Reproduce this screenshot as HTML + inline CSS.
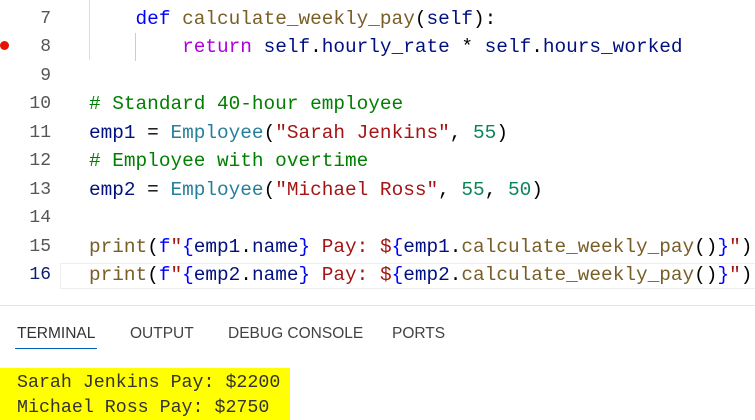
<!DOCTYPE html>
<html><head><style>
body{margin:0;width:755px;height:420px;background:#fff;overflow:hidden;position:relative;font-family:"Liberation Mono",monospace;}
.ln{position:absolute;left:0;width:51px;text-align:right;color:#555;font-size:18px;}
.cd{position:absolute;left:89px;font-size:19.4px;white-space:pre;color:#000;}
.k{color:#0000ff}.f{color:#795e26}.r{color:#af00db}.v{color:#001080}.s{color:#a31515}.n{color:#098658}.c{color:#008000}.t{color:#267f99}
.tab{position:absolute;top:325px;font-family:"Liberation Sans",sans-serif;font-size:15.5px;color:#424242;}
.out{position:absolute;left:17px;font-size:18.3px;color:#333;white-space:pre;}
</style></head><body>
<div style="position:absolute;left:89px;top:0;width:1px;height:60px;background:#ddd"></div>
<div style="position:absolute;left:135px;top:33px;width:1px;height:28px;background:#ccc"></div>
<div style="position:absolute;left:0;top:41px;width:9px;height:9px;border-radius:50%;background:#e51400"></div>
<div style="position:absolute;left:60px;top:263px;width:695px;height:26px;border:1px solid #eee;border-right:none;box-sizing:border-box"></div>
<div class="ln" style="top:9px">7</div><div class="cd" style="top:8px">    <span class="k">def</span> <span class="f">calculate_weekly_pay</span>(<span class="v">self</span>):</div>
<div class="ln" style="top:37px">8</div><div class="cd" style="top:36px">        <span class="r">return</span> <span class="v">self</span>.<span class="v">hourly_rate</span> * <span class="v">self</span>.<span class="v">hours_worked</span></div>
<div class="ln" style="top:66px">9</div>
<div class="ln" style="top:94px">10</div><div class="cd" style="top:93px"><span class="c"># Standard 40-hour employee</span></div>
<div class="ln" style="top:123px">11</div><div class="cd" style="top:122px"><span class="v">emp1</span> = <span class="t">Employee</span>(<span class="s">"Sarah Jenkins"</span>, <span class="n">55</span>)</div>
<div class="ln" style="top:151px">12</div><div class="cd" style="top:150px"><span class="c"># Employee with overtime</span></div>
<div class="ln" style="top:180px">13</div><div class="cd" style="top:179px"><span class="v">emp2</span> = <span class="t">Employee</span>(<span class="s">"Michael Ross"</span>, <span class="n">55</span>, <span class="n">50</span>)</div>
<div class="ln" style="top:208px">14</div>
<div class="ln" style="top:237px">15</div><div class="cd" style="top:236px"><span class="f">print</span>(<span class="k">f</span><span class="s">"</span><span class="k">{</span><span class="v">emp1</span>.<span class="v">name</span><span class="k">}</span><span class="s"> Pay: $</span><span class="k">{</span><span class="v">emp1</span>.<span class="f">calculate_weekly_pay</span>()<span class="k">}</span><span class="s">"</span>)</div>
<div class="ln" style="top:265px;color:#0b216f">16</div><div class="cd" style="top:264px"><span class="f">print</span>(<span class="k">f</span><span class="s">"</span><span class="k">{</span><span class="v">emp2</span>.<span class="v">name</span><span class="k">}</span><span class="s"> Pay: $</span><span class="k">{</span><span class="v">emp2</span>.<span class="f">calculate_weekly_pay</span>()<span class="k">}</span><span class="s">"</span>)</div>
<div style="position:absolute;left:0;top:305px;width:755px;height:1px;background:#e5e5e5"></div>
<div class="tab" style="left:17px;color:#333">TERMINAL</div>
<div style="position:absolute;left:15px;top:348px;width:82px;height:1px;background:#005fb8"></div>
<div class="tab" style="left:130px">OUTPUT</div>
<div class="tab" style="left:228px">DEBUG CONSOLE</div>
<div class="tab" style="left:392px">PORTS</div>
<div style="position:absolute;left:0;top:368px;width:290px;height:52px;background:#ffff00"></div>
<div class="out" style="top:373px">Sarah Jenkins Pay: $2200</div>
<div class="out" style="top:398px">Michael Ross Pay: $2750</div>
</body></html>
